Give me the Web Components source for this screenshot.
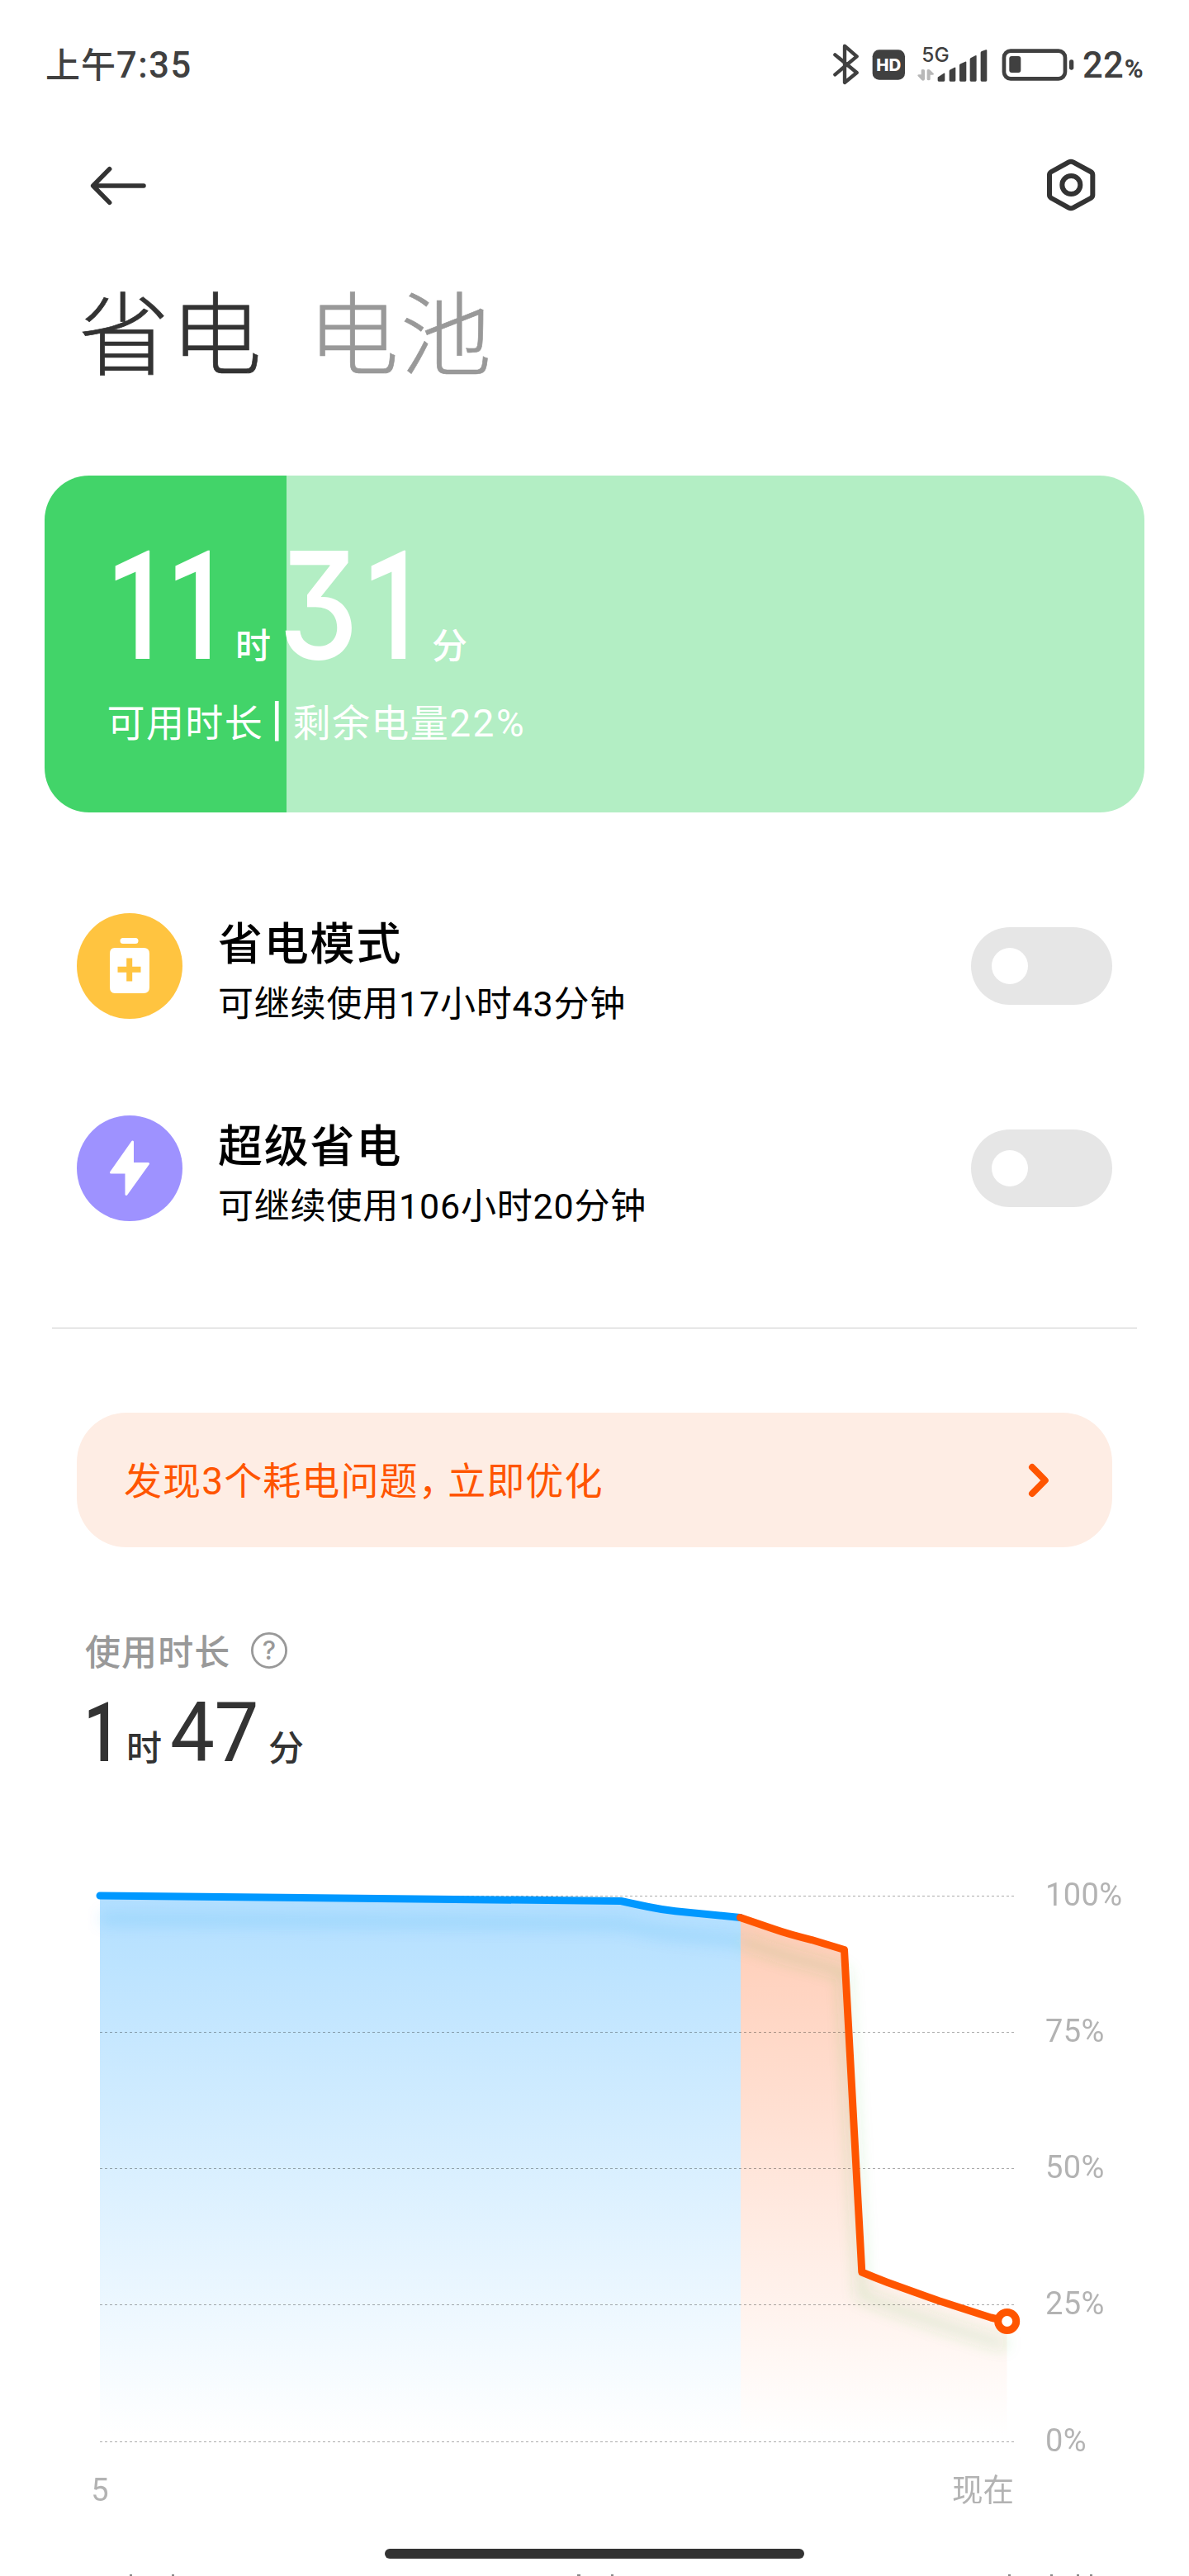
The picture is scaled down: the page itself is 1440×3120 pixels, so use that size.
<!DOCTYPE html>
<html lang="zh-CN">
<head>
<meta charset="utf-8">
<title>省电与电池</title>
<style>
  html, body { margin: 0; padding: 0; background: #fff; }
  body {
    width: 1440px;
    height: 3120px;
    overflow: hidden;
    font-family: Roboto, "Noto Sans CJK SC", sans-serif;
    color: #333;
  }
</style>
</head>
<body>
<power-app></power-app>

<script>
(function() {
  // Petit helper : enregistre un élément avec son gabarit
  function define(name, html) {
    const tpl = document.createElement('template');
    tpl.innerHTML = html;
    customElements.define(name, class extends HTMLElement {
      constructor() {
        super();
        this.attachShadow({ mode: 'open' }).appendChild(tpl.content.cloneNode(true));
      }
    });
  }

  define('status-bar', `
    <style>
      :host { display: flex; justify-content: space-between; height: 130px; padding: 50px 56px 0 55px; color: #404040; line-height: 60px; font-weight: 500; }
      .time { font-size: 43.5px; letter-spacing: 1.5px; }
      .time i { font-style: normal; font-size: 42px; letter-spacing: 1px; }
      .right { display: flex; align-items: flex-start; }
      .pct { width: 73px; font-size: 43.5px; letter-spacing: .2px; margin-left: 10px; white-space: nowrap; }
      .pct b { font-size: 31px; letter-spacing: 0; margin-left: 1px; }
    </style>
    <div class="time"><i>上午</i>7:35</div>
    <div class="right">
      <svg width="293.3" height="60" viewBox="140 60 880 180" fill="#404040">
        <path d="M150 109L229 174L185 210V77L229 115L150 181" fill="none" stroke="#404040" stroke-width="13" stroke-linecap="round" stroke-linejoin="round"/>
        <rect x="286" y="91" width="118" height="109" rx="24"/>
        <text x="300" y="168" font-family="Inter" font-weight="800" font-size="60" fill="#fff" textLength="90" lengthAdjust="spacingAndGlyphs">HD</text>
        <text x="465" y="134" font-family="Inter" font-weight="500" font-size="71" textLength="100" lengthAdjust="spacingAndGlyphs">5G</text>
        <path d="M463 166q0-4 6-4t7 4v32q-1 5-6 5-3 0-6-3L450 185q0-4 4-4h9zM484 166q1-5 6-4 3 0 6 3l13 13q1 4-4 4h-9v16q0 4-6 4t-6-4z" fill="#b8b8b8"/>
        <path d="M523 192q0-3 4-4l18-12q4-2 4 2v24q0 4-4 4h-18q-4 0-4-4zM565 168q0-3 4-5l15-8q4-2 4 2v45q0 4-4 4h-15q-4 0-4-4zM602 147q0-3 4-5l17-8q4-2 4 2v66q0 4-4 4h-17q-4 0-4-4zM640 125q0-3 4-5l16-8q4-2 4 2v88q0 4-4 4h-16q-4 0-4-4zM679 101q0-3 4-5l15-5q4-1 4 2v109q0 4-4 4h-15q-4 0-4-4z"/>
        <rect x="764" y="95" width="222" height="101" rx="24" fill="none" stroke="#404040" stroke-width="14"/>
        <rect x="783" y="114" width="42" height="60" rx="9"/>
        <rect x="1001" y="127" width="16" height="37" rx="7"/>
      </svg>
      <div class="pct">22<b>%</b></div>
    </div>
  `);

  define('nav-bar', `
    <style>
      :host { display: flex; justify-content: space-between; align-items: center; height: 90px; padding: 0 98px; }
      svg { display: block; fill: none; stroke: #333; stroke-linecap: round; stroke-linejoin: round; }
    </style>
    <svg width="90" height="90" viewBox="294 451 270 270"><path d="M522 586H339M398 525L338 586L398 647" stroke-width="16.5"/></svg>
    <svg width="90" height="90" viewBox="877 451 270 270"><path d="M1004 500Q1012 496 1020 500L1084 535Q1091 539 1091 546V620Q1091 627 1084 631L1020 666Q1012 670 1004 666L941 631Q934 627 934 620V546Q934 539 941 535Z" stroke-width="18"/><circle cx="1013" cy="583" r="33" stroke-width="18"/></svg>
  `);

  define('page-tabs', `
    <style>
      :host { display: flex; gap: 54px; height: 139px; padding: 69px 0 0 95px; font-size: 110px; line-height: 140px; letter-spacing: 2px; font-weight: 300; -webkit-text-stroke: .7px; }
      .off { color: #999; }
    </style>
    <span>省电</span><span class="off">电池</span>
  `);

  define('battery-card', `
    <style>
      :host { display: block; box-sizing: border-box; height: 408px; margin: 98px 54px 0; padding: 82px 0 0 67.5px; border-radius: 54px;
        background: linear-gradient(90deg, #42d469 293px, #b3eec4 293px); color: #fff; }
      .big { display: flex; align-items: baseline; height: 150px; line-height: 150px; font-size: 184px; }
      /* chiffres resserrés : le 1 garde un fût de 17px */
      .n { width: 139px; margin-left: 6px; letter-spacing: -10px; font-weight: 500; transform: scaleX(.77); transform-origin: 0 0; }
      .one { width: 67px; }
      .three { width: 94.5px; margin-left: 9px; font-family: Inter; font-size: 180px; font-weight: 450;
        font-feature-settings: "cv09"; transform: scaleX(.86); transform-origin: 0 0; }
      .u { font-size: 43px; font-weight: 500; margin-left: 18.5px; }
      .sub { display: flex; height: 60px; margin: 38px 0 0 8px; font-size: 46px; line-height: 60px; letter-spacing: 1.4px; }
      .sub b { margin: -6px 12px 0 9px; font-size: 58px; font-weight: 500; letter-spacing: 0; }
      .sub i { font-style: normal; letter-spacing: 2.6px; }
    </style>
    <div class="big"><span class="n">11</span><span class="u">时</span><span class="three">3</span><span class="n one">1</span><span class="u">分</span></div>
    <div class="sub"><span>可用时长</span><b>|</b><span>剩余电量<i>22%</i></span></div>
  `);

  define('toggle-switch', `
    <style>
      :host { display: flex; align-items: center; box-sizing: border-box; width: 171px; height: 94px; padding-left: 25px; border-radius: 47px; background: #e6e6e6; }
      i { width: 44px; height: 44px; border-radius: 50%; background: #fff; }
    </style>
    <i></i>
  `);

  define('mode-row', `
    <style>
      :host { display: flex; height: 128px; padding: 0 93px; color: #000; }
      .text { flex: 1; margin: 7px 0 0 43px; }
      .title { font-size: 54px; line-height: 64px; letter-spacing: 1.8px; font-weight: 500; }
      .sub { margin-top: 11px; font-size: 43px; line-height: 56px; letter-spacing: .8px; white-space: nowrap; }
      toggle-switch { margin-top: 17px; }
    </style>
    <slot name="icon"></slot>
    <div class="text"><div class="title"><slot name="title"></slot></div><div class="sub"><slot></slot></div></div>
    <toggle-switch></toggle-switch>
  `);

  define('tip-banner', `
    <style>
      :host { display: flex; align-items: center; justify-content: space-between; box-sizing: border-box; height: 163px; margin: 102px 93px 0; padding: 0 72px 0 57px;
        border-radius: 60px; background: #feede4; color: #ff5500; font-size: 46px; letter-spacing: 1.1px; line-height: 60px; }
      span { padding-top: 3px; }
      i { font-style: normal; letter-spacing: -10.5px; }
    </style>
    <span>发现3个耗电问题<i>，</i>立即优化</span>
    <svg width="30" height="50" fill="none" stroke="#ff5500" stroke-width="8" stroke-linecap="round" stroke-linejoin="round"><path d="M5 9L20.8 25L5 41"/></svg>
  `);

  define('usage-summary', `
    <style>
      :host { display: block; padding: 98px 0 0 98px; }
      .label { display: flex; gap: 23px; margin-left: 5px; color: #999; font-size: 43px; line-height: 60px; letter-spacing: 1.1px; font-weight: 500; }
      svg { margin-top: 3px; }
      .value { display: flex; align-items: baseline; height: 110px; margin-top: 12px; font-size: 100px; line-height: 110px; }
      .one { width: 53px; margin-left: 3px; font-weight: 500; transform: scaleX(.8); transform-origin: 0 0; }
      .min { width: 110px; margin-left: 10px; transform: scaleX(.96); transform-origin: 0 0; letter-spacing: -.5px; }
      .u { font-size: 43px; font-weight: 500; margin-left: -1px; }
      .min + .u { margin-left: 9px; }
    </style>
    <div class="label"><span>使用时长</span>
      <svg width="48" height="48" fill="#999"><circle cx="24" cy="24" r="20.6" fill="none" stroke="#999" stroke-width="2.8"/><text x="24" y="35" text-anchor="middle" font-family="Inter" font-size="31" letter-spacing="0">?</text></svg>
    </div>
    <div class="value"><span class="one">1</span><span class="u">时</span><span class="min">47</span><span class="u">分</span></div>
  `);

  // Courbes de niveau de batterie
  const BLUE = 'M121 2296L752 2302.5Q768 2306 785 2309.5T818 2314.8L896.5 2322.4';
  const ORANGE = 'M896.5 2322.4Q916 2329 936 2336T983 2349.5L1022.5 2361.5L1043.8 2752Q1058 2758 1075 2764.5L1136.5 2786.5L1200 2807L1219.5 2811.5';
  const LEVELS = [['100%', 2296.5], ['75%', 2461.5], ['50%', 2626.5], ['25%', 2791.5], ['0%', 2957.5]];

  define('battery-chart', `
    <style>
      :host { display: block; height: 966px; }
      svg { display: block; }
      text { font-size: 38px; fill: #b3b3b3; }
    </style>
    <svg width="1440" height="966" viewBox="0 2154 1440 966">
      <defs>
        <linearGradient id="b" gradientUnits="userSpaceOnUse" x1="0" y1="2296" x2="0" y2="2950"><stop stop-color="#b2dfff"/><stop offset="1" stop-color="#fff"/></linearGradient>
        <linearGradient id="o" gradientUnits="userSpaceOnUse" x1="0" y1="2322" x2="0" y2="2950"><stop stop-color="#ffcdb7"/><stop offset="1" stop-color="#fff"/></linearGradient>
        <filter id="s" filterUnits="userSpaceOnUse" x="80" y="2250" width="1200" height="640"><feGaussianBlur stdDeviation="9"/></filter>
      </defs>
      <path d="${BLUE}H897V2957H121Z" fill="url(#b)"/>
      <path d="${ORANGE}V2957H897V2322Z" fill="url(#o)"/>
      <g filter="url(#s)" fill="none" stroke-width="11">
        <path d="${BLUE}" transform="translate(0 28)" stroke="#1e96e6" stroke-opacity=".17"/>
        <path d="${ORANGE}" transform="translate(0 28)" stroke="#3cb43c" stroke-opacity=".18"/>
      </g>
      ${LEVELS.map(([t, y]) => `
        <path d="M121 ${y}H1229" stroke="#000" stroke-opacity=".33" stroke-dasharray="3 3"/>
        <text x="1266" y="${y + 11.5}" letter-spacing=".4">${t}</text>`).join('')}
      <g fill="none" stroke-width="9" stroke-linecap="round" stroke-linejoin="round">
        <path d="${BLUE}" stroke="#0098ff"/>
        <path d="${ORANGE}" stroke="#ff5500"/>
        <circle cx="1219.7" cy="2811.5" r="11" fill="#fff" stroke="#ff5500"/>
      </g>
      <text x="121" y="3029" text-anchor="middle">5</text>
      <text x="1228" y="3029" text-anchor="end" style="font-size:37.5px">现在</text>
      <path d="M157 3119h3M208 3119h3M699 3119h4M740 3119h3M1221 3119h3M1272 3119h3M1304 3119h3M1320 3119h3" stroke="#888" stroke-width="2"/>
    </svg>
  `);

  define('power-app', `
    <style>
      :host { display: block; position: relative; height: 3120px; overflow: hidden; }
      .modes { display: flex; flex-direction: column; gap: 117px; padding: 122px 0 129px; }
      hr { height: 1px; margin: 0 63px; border: 0; background: #ccc; }
      .home { position: absolute; left: 466px; bottom: 21px; width: 508px; height: 12px; border-radius: 6px; background: #333; }
    </style>
    <status-bar></status-bar>
    <nav-bar></nav-bar>
    <page-tabs></page-tabs>
    <battery-card></battery-card>
    <div class="modes">
      <mode-row>
        <svg slot="icon" width="128" height="128"><circle cx="64" cy="64" r="64" fill="#ffc440"/><path d="M56 30h15a3.5 3.5 0 0 1 0 7H56a3.5 3.5 0 0 1 0-7zM46 42H81q7 0 7 7V90q0 7-7 7H46q-6 0-6-7V49q0-7 6-7z" fill="#fff"/><path d="M53 68.3H74M63.7 58V79" stroke="#ffc440" stroke-width="7" stroke-linecap="square"/></svg>
        <span slot="title">省电模式</span>可继续使用17小时43分钟
      </mode-row>
      <mode-row>
        <svg slot="icon" width="128" height="128"><circle cx="64" cy="64" r="64" fill="#9e92ff"/><path d="M67.5 32V58.5H86.5L60 95.5V69H41.5Z" fill="#fff" stroke="#fff" stroke-width="3" stroke-linejoin="round"/></svg>
        <span slot="title">超级省电</span>可继续使用106小时20分钟
      </mode-row>
    </div>
    <hr>
    <tip-banner></tip-banner>
    <usage-summary></usage-summary>
    <battery-chart></battery-chart>
    <div class="home"></div>
  `);
})();
</script>
</body>
</html>
